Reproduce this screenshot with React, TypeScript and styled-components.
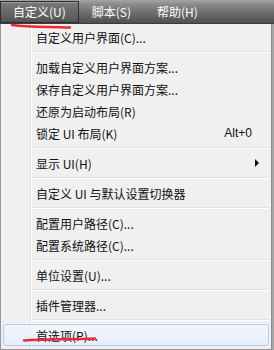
import React from "react";
import styled, { createGlobalStyle } from "styled-components";

const GlobalStyle = createGlobalStyle`
  html, body {
    margin: 0;
    padding: 0;
    background: #ffffff;
  }
  body {
    font-family: "Noto Sans CJK SC", "Liberation Sans", sans-serif;
    font-size: 12px;
  }
`;

type Entry =
  | { kind: "item"; label: string; shortcut?: string; sub?: boolean; active?: boolean }
  | { kind: "sep" };

const entries: Entry[] = [
  { kind: "item", label: "自定义用户界面(C)..." },
  { kind: "sep" },
  { kind: "item", label: "加载自定义用户界面方案..." },
  { kind: "item", label: "保存自定义用户界面方案..." },
  { kind: "item", label: "还原为启动布局(R)" },
  { kind: "item", label: "锁定 UI 布局(K)", shortcut: "Alt+0" },
  { kind: "sep" },
  { kind: "item", label: "显示 UI(H)", sub: true },
  { kind: "sep" },
  { kind: "item", label: "自定义 UI 与默认设置切换器" },
  { kind: "sep" },
  { kind: "item", label: "配置用户路径(C)..." },
  { kind: "item", label: "配置系统路径(C)..." },
  { kind: "sep" },
  { kind: "item", label: "单位设置(U)..." },
  { kind: "sep" },
  { kind: "item", label: "插件管理器..." },
  { kind: "sep" },
  { kind: "item", label: "首选项(P)...", active: true },
];

const App = () => {
  return (
    <Page>
      <GlobalStyle />
      <MenuBar>
        <BarItem $open>自定义(U)</BarItem>
        <BarItem>脚本(S)</BarItem>
        <BarItem>帮助(H)</BarItem>
      </MenuBar>
      <Dropdown>
        <Gutter />
        {entries.map((e, i) =>
          e.kind === "sep" ? (
            <Separator key={i} />
          ) : (
            <Item key={i} $active={e.active}>
              <Label>{e.label}</Label>
              {e.shortcut && <Shortcut>{e.shortcut}</Shortcut>}
              {e.sub && <Arrow />}
            </Item>
          )
        )}
      </Dropdown>
      {/* red hand-drawn annotations */}
      <Scribble viewBox="0 0 274 350" width="274" height="350">
        <path
          d="M12 25 C 30 27.5, 50 26.5, 70 27.5"
          stroke="#ea2a35"
          strokeWidth="2.4"
          fill="none"
          strokeLinecap="round"
        />
        <path
          d="M24 340.5 C 45 339, 70 339.5, 95 338.5"
          stroke="#ea2a35"
          strokeWidth="2.4"
          fill="none"
          strokeLinecap="round"
        />
      </Scribble>
    </Page>
  );
};

export default App;

const Page = styled.div`
  position: relative;
  width: 274px;
  height: 350px;
  overflow: hidden;
`;

const MenuBar = styled.div`
  height: 24px;
  display: flex;
  align-items: center;
  background: linear-gradient(to bottom, #a4a4a4 0%, #8a8a8a 20%, #6a6a6a 60%, #4f4f4f 100%);
  box-sizing: border-box;
  border-bottom: 1px solid #3c3c3c;
`;

const BarItem = styled.div<{ $open?: boolean }>`
  height: 22px;
  box-sizing: border-box;
  display: flex;
  align-items: center;
  white-space: nowrap;
  color: #ffffff;
  font-size: 12px;
  padding: 0 12px;
  min-width: ${(p) => (p.$open ? "77px" : "0")};
  border: 1px solid ${(p) => (p.$open ? "#2e2e2e" : "transparent")};
  background: ${(p) =>
    p.$open ? "linear-gradient(to bottom, #7a7a7a, #555555)" : "transparent"};
  box-shadow: ${(p) => (p.$open ? "inset 0 1px 0 rgba(255,255,255,0.25)" : "none")};
`;

const Dropdown = styled.div`
  position: relative;
  width: 272px;
  height: 326px;
  box-sizing: border-box;
  background: #f0f0f0;
  border: 1px solid #979797;
  border-top: none;
  border-right: 1px solid #8c8c8c;
  box-shadow: 2px 0 0 #a6a6a6;
  padding: 2px 0 0 2px;
  display: flex;
  flex-direction: column;
`;

const Gutter = styled.div`
  position: absolute;
  left: 29px;
  top: 0;
  bottom: 0;
  width: 1px;
  background: #e2e3e3;
  border-right: 1px solid #ffffff;
`;

const Item = styled.div<{ $active?: boolean }>`
  position: relative;
  height: 22px;
  flex: none;
  display: flex;
  align-items: center;
  box-sizing: border-box;
  margin-right: 2px;
  padding-left: 32px;
  padding-right: 16px;
  color: #111111;
  border-radius: 3px;
  border: 1px solid ${(p) => (p.$active ? "#aed0f3" : "transparent")};
  background: ${(p) =>
    p.$active ? "linear-gradient(to bottom, #f3f6fb, #e7eef8)" : "transparent"};
`;

const Label = styled.span`
  flex: 1;
  white-space: nowrap;
`;

const Shortcut = styled.span`
  font-family: "Liberation Sans", sans-serif;
  font-size: 12px;
`;

const Arrow = styled.span`
  width: 0;
  height: 0;
  border-top: 4px solid transparent;
  border-bottom: 4px solid transparent;
  border-left: 4px solid #111111;
  margin-right: -7px;
`;

const Separator = styled.div`
  height: 8px;
  flex: none;
  display: flex;
  align-items: center;
  margin-left: 28px;
  margin-right: 2px;
  &::before {
    content: "";
    display: block;
    width: 100%;
    height: 1px;
    background: #e0e0e0;
    border-bottom: 1px solid #ffffff;
  }
`;

const Scribble = styled.svg`
  position: absolute;
  left: 0;
  top: 0;
  pointer-events: none;
`;
